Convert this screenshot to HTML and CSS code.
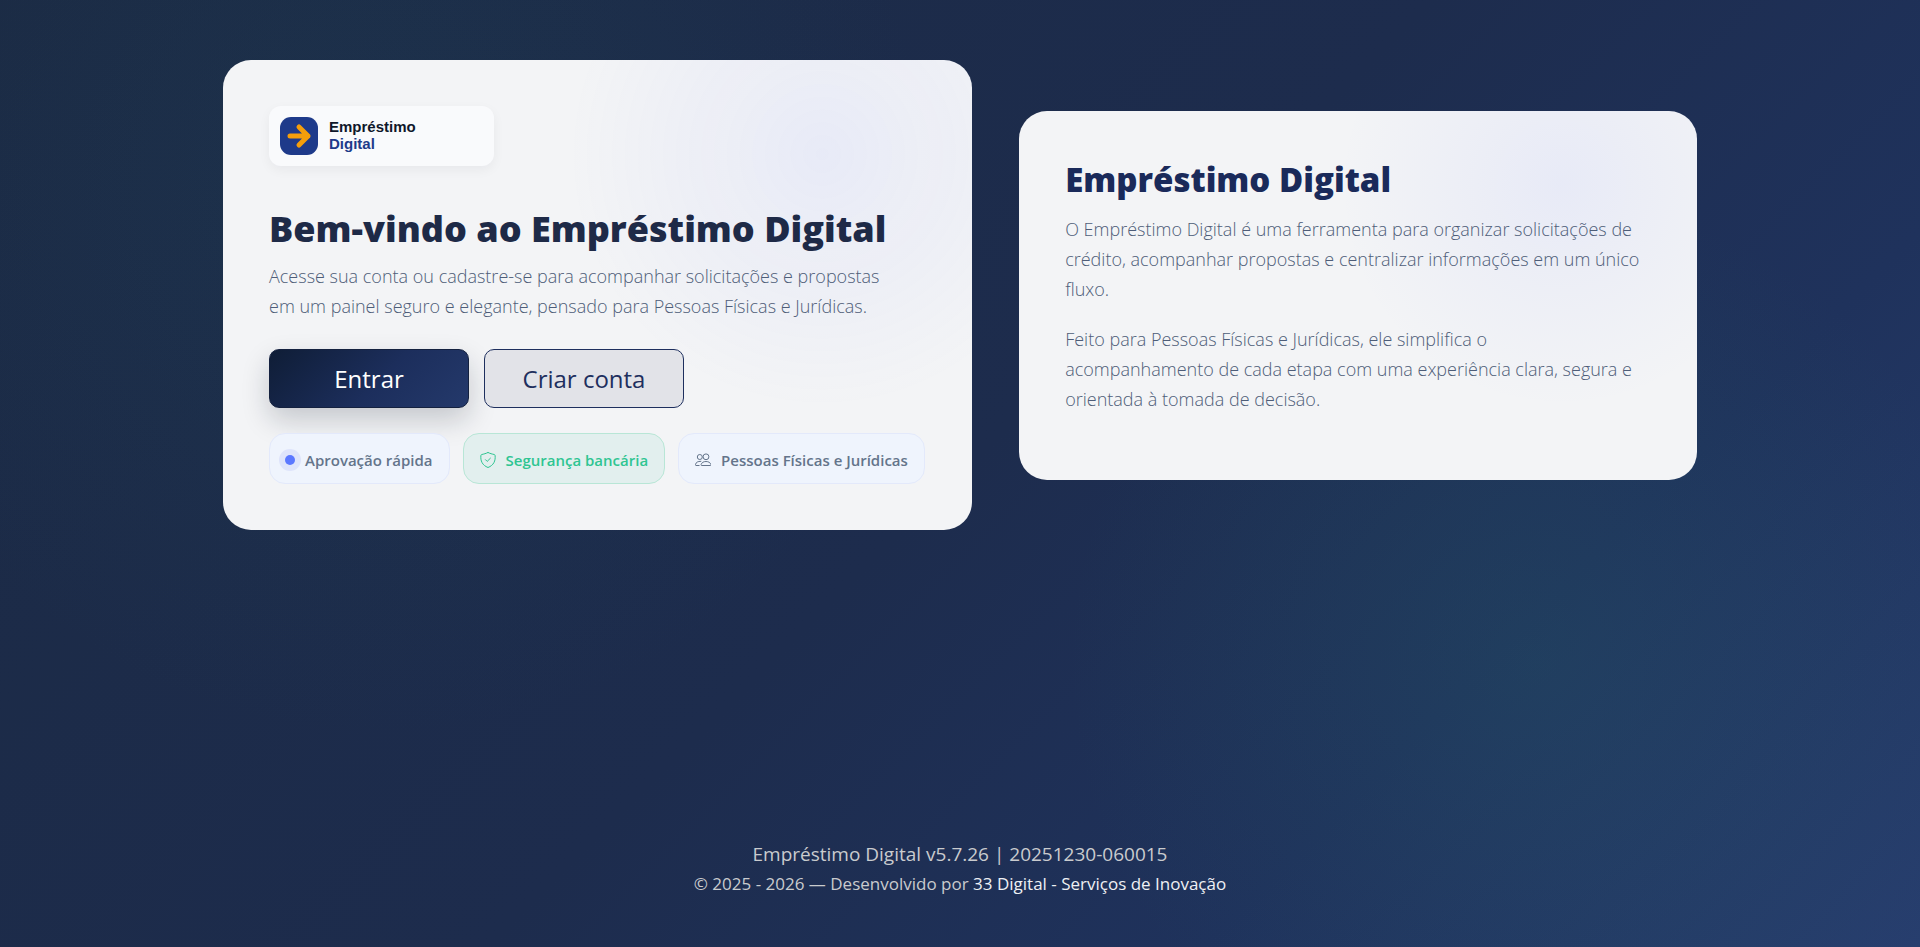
FILE: index.html
```html
<!DOCTYPE html>
<html lang="pt-BR">
<head>
  <meta charset="UTF-8" />
  <meta name="viewport" content="width=device-width, initial-scale=1.0" />
  <title>Empréstimo Digital</title>
  <link rel="stylesheet" href="styles.css">
</head>
<body>
  <main class="hero">
    <section class="card">
      <div class="logo">
        <svg class="logo-mark" viewBox="0 0 38 38" aria-hidden="true">
          <rect width="38" height="38" rx="11" fill="#1e3a8a"/>
          <path d="M10 19h18M19 10l9 9-9 9" fill="none" stroke="#f59e0b" stroke-width="5" stroke-linecap="round" stroke-linejoin="round"/>
        </svg>
        <div class="logo-text">
          <span>Empréstimo</span>
          <span class="logo-accent">Digital</span>
        </div>
      </div>
      <h1>Bem-vindo ao Empréstimo Digital</h1>
      <p class="lead">Acesse sua conta ou cadastre-se para acompanhar solicitações e propostas em um painel seguro e elegante, pensado para Pessoas Físicas e Jurídicas.</p>
      <div class="actions">
        <button class="btn btn-primary" type="button">Entrar</button>
        <button class="btn btn-outline" type="button">Criar conta</button>
      </div>
      <div class="chips">
        <span class="chip chip-dot"><span class="dot"></span>Aprovação rápida</span>
        <span class="chip chip-success">
          <svg class="chip-icon" viewBox="0 0 16 16" fill="none" stroke="currentColor" stroke-linecap="round" stroke-linejoin="round" aria-hidden="true">
            <path d="M8 .5C6.400 1.400 3.400 2.200 1.800 2.500c-.5.1-.8.400-.9.900C.3 8.800 2.300 13.300 8 15.500c5.700-2.200 7.700-6.700 7.100-12.100-.1-.5-.4-.8-.9-.9C12.600 2.200 9.600 1.400 8 .5z"/>
            <path d="M5.500 7.700l1.700 1.700 3.200-3.200"/>
          </svg>
          Segurança bancária
        </span>
        <span class="chip">
          <svg class="chip-icon" viewBox="0 0 16 16" fill="none" stroke="currentColor" stroke-linejoin="round" aria-hidden="true">
            <circle cx="4.800" cy="5" r="2.500"/>
            <circle cx="11" cy="4.800" r="2.900"/>
            <path d="M6.500 13.500c-.6 0-.5-.5-.4-1C6.700 10.500 8.600 9.500 11 9.500s4.300 1 4.900 3c.1.500.2 1-.4 1z"/>
            <path d="M4.500 13.500H1c-.6 0-.6-.5-.5-1C1 10.300 2.600 9.300 6.300 9.300"/>
          </svg>
          Pessoas Físicas e Jurídicas
        </span>
      </div>
    </section>

    <section class="card">
      <h2>Empréstimo Digital</h2>
      <p>O Empréstimo Digital é uma ferramenta para organizar solicitações de crédito, acompanhar propostas e centralizar informações em um único fluxo.</p>
      <p>Feito para Pessoas Físicas e Jurídicas, ele simplifica o<br>acompanhamento de cada etapa com uma experiência clara, segura e orientada à tomada de decisão.</p>
    </section>
  </main>

  <footer>
    <div class="version">Empréstimo Digital v5.7.26 | 20251230-060015</div>
    <div>© 2025 - 2026 — Desenvolvido por <a href="#">33 Digital - Serviços de Inovação</a></div>
  </footer>
</body>
</html>
```
FILE: styles.css
```css
* {
  box-sizing: border-box;
}
body {
  margin: 0;
  min-height: 100vh;
  display: flex;
  flex-direction: column;
  justify-content: space-between;
  font-family: 'Segoe UI', 'Open Sans', 'Noto Sans', sans-serif;
  color: #64748b;
  background:
    radial-gradient(circle at 20% 20%, rgba(34, 84, 100, 0.17), transparent 32%),
    radial-gradient(circle at 80% 70%, rgba(38, 110, 105, 0.2), transparent 28%),
    linear-gradient(135deg, #1b2a44 0%, #1d2c4d 50%, #1f325c 75%, #273e6e 100%);
}
.hero {
  width: 100%;
  max-width: 1522px;
  margin: 0 auto;
  padding: 60px 24px;
  display: grid;
  grid-template-columns: 21fr 19fr;
  gap: 47px;
  align-items: center;
}
.card {
  padding: 46px;
  border-radius: 28px;
  background:
    radial-gradient(circle at 80% 20%, rgba(99, 120, 255, 0.08), transparent 36%),
    #f3f4f6;
}

/* Logo */
.logo {
  display: flex;
  align-items: center;
  gap: 11px;
  width: 225px;
  height: 60px;
  padding: 0 11px;
  margin-bottom: 37px;
  border-radius: 12px;
  background: #f9fafc;
  box-shadow: 0 4px 12px rgba(15, 23, 42, 0.05);
}
.logo-mark {
  width: 38px;
  height: 38px;
}
.logo-text {
  display: flex;
  flex-direction: column;
  padding-bottom: 2px;
  font-family: Arial, 'Liberation Sans', sans-serif;
  font-size: 15px;
  font-weight: bold;
  line-height: 17px;
  color: #0f172a;
}
.logo-accent {
  color: #1e3a8a;
}

h1, h2 {
  margin: 0;
  font-weight: 800;
}
h1 {
  font-size: 36px;
  line-height: 52px;
  color: #1e2a47;
}
h2 {
  margin-bottom: 12px;
  font-size: 33px;
  line-height: 45px;
  color: #1a2a5a;
}
p {
  margin: 0 0 20px;
  font-size: 18px;
  font-weight: 300;
  line-height: 30px;
  color: #4e5d78;
}
.lead {
  max-width: 630px;
  margin: 6px 0 28px;
}

/* Buttons */
.actions {
  display: flex;
  flex-wrap: wrap;
  gap: 15px;
  margin-bottom: 25px;
}
.btn {
  width: 200px;
  height: 59px;
  border-radius: 10px;
  font-family: inherit;
  font-size: 24px;
  cursor: pointer;
}
.btn-primary {
  border: 1px solid #14213f;
  color: #fff;
  background: linear-gradient(135deg, #0f1d36, #1c2e5c 55%, #24396b);
  box-shadow: 0 12px 28px rgba(15, 23, 42, 0.2);
}
.btn-outline {
  border: 1px solid #1e2f5e;
  color: #1e2f5e;
  background: #e2e3e8;
}

/* Chips */
.chips {
  display: flex;
  flex-wrap: wrap;
  gap: 13px;
}
.chip {
  display: flex;
  align-items: center;
  gap: 10px;
  height: 51px;
  padding: 2px 16px 0;
  border: 1px solid #e3e9fb;
  border-radius: 16px;
  background: #eff4fd;
  font-size: 15px;
  font-weight: 600;
  white-space: nowrap;
}
.chip-dot {
  padding-left: 15px;
}
.dot {
  width: 10px;
  height: 10px;
  border-radius: 50%;
  background: #5b78ff;
  box-shadow: 0 0 0 6px #dee4fb;
}
.chip-success {
  color: #2fc592;
  background: #e2efee;
  border-color: #b8e6d6;
}
.chip-icon {
  width: 16px;
  height: 16px;
}

footer {
  padding: 0 24px 48px;
  text-align: center;
  font-size: 17px;
  line-height: 30px;
  color: #c9cbce;
}
.version {
  font-size: 19px;
}
footer a {
  color: #eef0f4;
  text-decoration: none;
}
```
